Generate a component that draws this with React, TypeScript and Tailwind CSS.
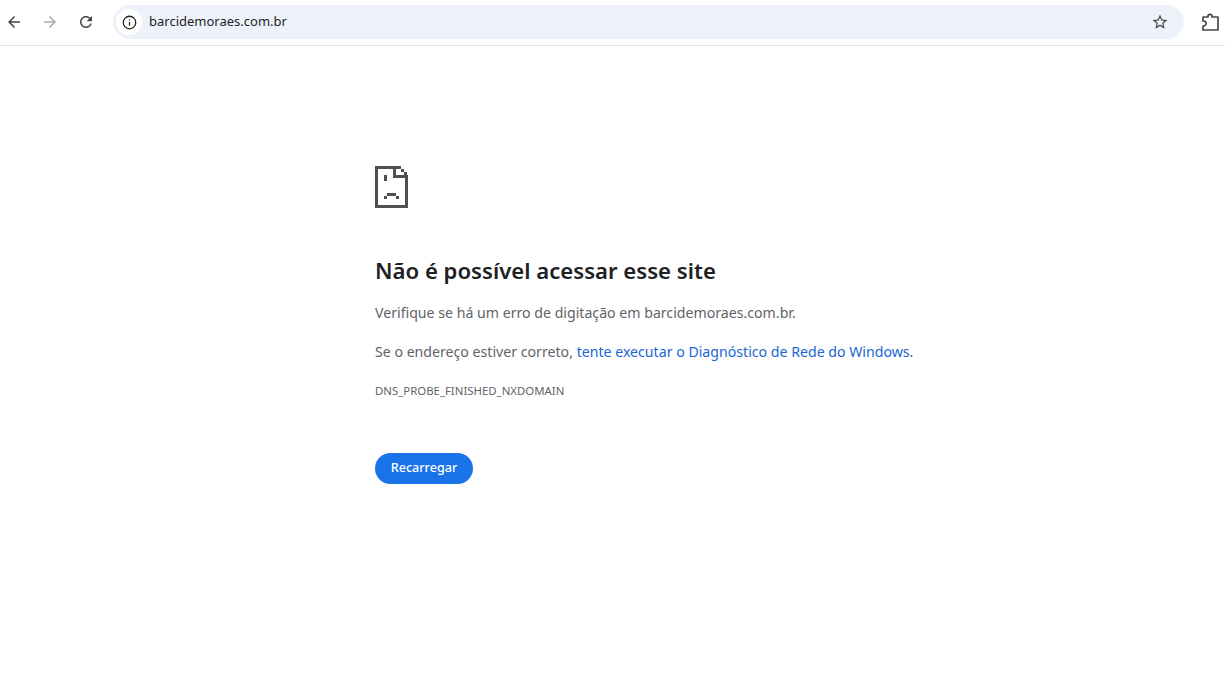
const pageFont = "font-['Noto_Sans','Open_Sans',sans-serif]";

function SadTab() {
  return (
    <svg viewBox="0 0 33 42" className="h-[42px] w-[33px]" fill="#505050" aria-hidden>
      <rect x="0" y="0" width="26" height="3" />
      <rect x="0" y="0" width="3" height="42" />
      <rect x="0" y="39" width="33" height="3" />
      <rect x="30" y="9" width="3" height="33" />
      <rect x="18" y="0" width="3" height="12" />
      <rect x="18" y="9" width="15" height="3" />
      <rect x="26" y="3" width="3" height="3" />
      <rect x="29" y="6" width="3" height="3" />
      <rect x="9" y="9" width="3" height="6" />
      <rect x="12" y="27" width="9" height="3" />
      <rect x="9" y="30" width="3" height="3" />
      <rect x="21" y="30" width="3" height="3" />
    </svg>
  );
}

function NavIcon({ d, color = "#444746" }: { d: string; color?: string }) {
  return (
    <svg viewBox="0 0 24 24" className="h-[18px] w-[18px]" fill={color} aria-hidden>
      <path d={d} />
    </svg>
  );
}

const arrowBack = "M20 11H7.83l5.59-5.59L12 4l-8 8 8 8 1.41-1.41L7.83 13H20v-2z";
const arrowForward = "M12 4l-1.41 1.41L16.17 11H4v2h12.17l-5.58 5.59L12 20l8-8z";
const reload =
  "M17.65 6.35C16.2 4.9 14.21 4 12 4c-4.42 0-7.99 3.58-7.99 8s3.57 8 7.99 8c3.73 0 6.84-2.55 7.73-6h-2.08c-.82 2.33-3.04 4-5.65 4-3.31 0-6-2.69-6-6s2.69-6 6-6c1.66 0 3.14.69 4.22 1.78L13 11h7V4l-2.35 2.35z";
const star =
  "M22 9.24l-7.19-.62L12 2 9.19 8.63 2 9.24l5.46 4.73L5.82 21 12 17.27 18.18 21l-1.63-7.03L22 9.24zM12 15.4l-3.76 2.27 1-4.28-3.32-2.88 4.38-.38L12 6.1l1.71 4.04 4.38.38-3.32 2.88 1 4.28L12 15.4z";

export default function App() {
  return (
    <div className={`flex h-[677px] w-[1225px] flex-col overflow-hidden bg-white ${pageFont}`}>
      <div className="flex h-[46px] items-center border-b border-[#dfe1e5] pb-px">
        <div className="flex w-[113px] items-center pl-[5px]">
          <div className="flex w-[36px] justify-start"><NavIcon d={arrowBack} /></div>
          <div className="flex w-[36px] justify-start"><NavIcon d={arrowForward} color="#a9abac" /></div>
          <div className="flex w-[36px] justify-start"><NavIcon d={reload} /></div>
        </div>
        <div className="flex h-[34px] w-[1071px] items-center rounded-full bg-[#edf2fa] pl-[3px] pr-[15px]">
          <div className="flex h-[26px] w-[26px] items-center justify-center rounded-full bg-white">
            <svg viewBox="0 0 24 24" className="h-[15px] w-[15px]" fill="none" stroke="#1f1f1f" strokeWidth="2" aria-hidden>
              <circle cx="12" cy="12" r="10" />
              <path d="M12 11v6M12 7v2" />
            </svg>
          </div>
          <span className="ml-[7px] text-[13px] text-[#1f1f1f]">barcidemoraes.com.br</span>
          <div className="ml-auto flex"><NavIcon d={star} /></div>
        </div>
        <div className="ml-[17px] flex">
          <svg viewBox="0 0 18 18" className="h-[18px] w-[18px]" fill="none" stroke="#444746" strokeWidth="1.7" strokeLinejoin="round" aria-hidden>
            <path d="M2 4h5V3.4a2 2 0 0 1 4 0V4h6v13H2v-4h.6a2.5 2.5 0 0 0 0-5H2z" />
          </svg>
        </div>
      </div>

      <main className="flex flex-col pl-[375px] pt-[120px]">
        <SadTab />
        <h1 className="mt-[46px] text-[22.13px] leading-[33px] font-semibold text-[#202124]">
          Não é possível acessar esse site
        </h1>
        <p className="mt-[14px] text-[14.15px] leading-[24px] text-[#5f6368]">
          Verifique se há um erro de digitação em barcidemoraes.com.br.
        </p>
        <p className="mt-[15px] text-[14.15px] leading-[24px] text-[#5f6368]">
          Se o endereço estiver correto,{" "}
          <a className="text-[#1967d2]">tente executar o Diagnóstico de Rede do Windows</a>.
        </p>
        <p className="mt-[19px] text-[11.4px] leading-[16px] text-[#5f6368]">DNS_PROBE_FINISHED_NXDOMAIN</p>
        <div className="mt-[54px] flex">
          <button className="flex h-[31px] w-[98px] items-center justify-center rounded-full bg-[#1a73e8] text-[12.6px] font-medium text-white">
            Recarregar
          </button>
        </div>
      </main>
    </div>
  );
}
